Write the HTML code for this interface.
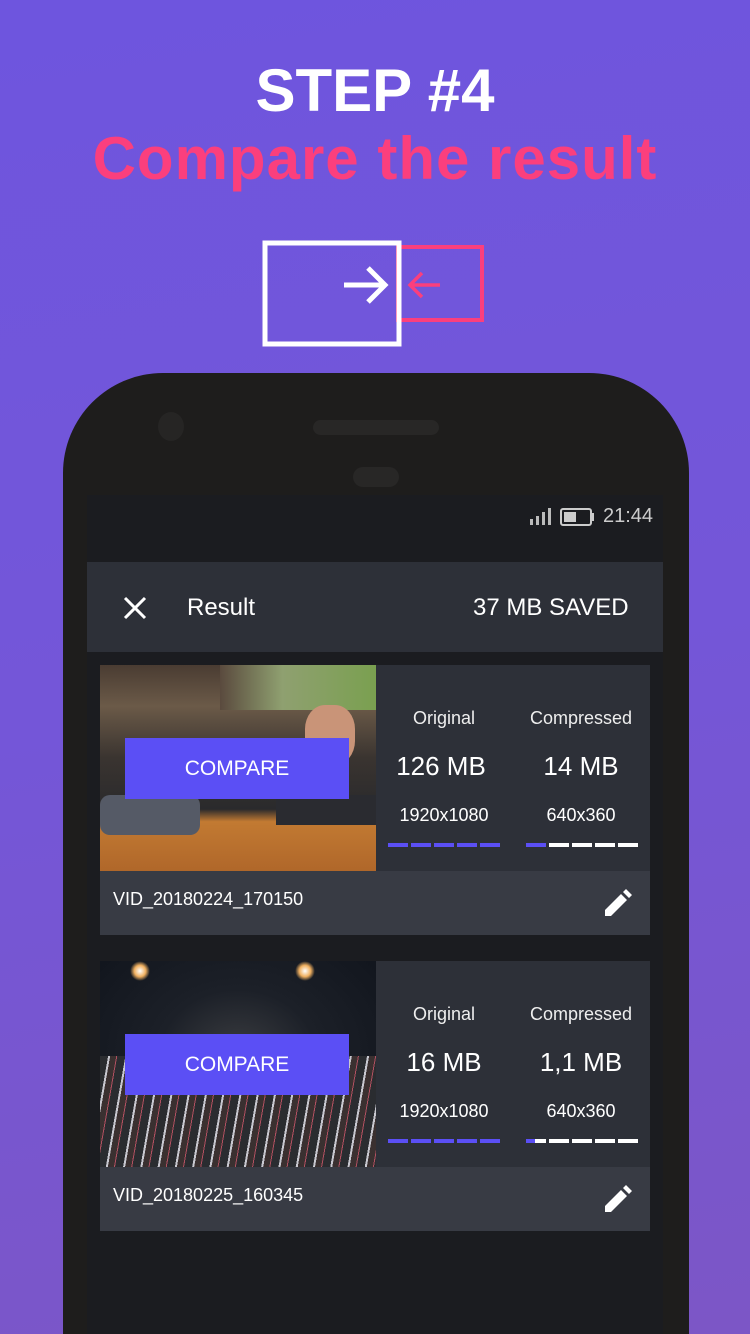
<!DOCTYPE html>
<html style="width:750px;height:1334px;overflow:hidden"><head><meta charset="utf-8"><style>
*{margin:0;padding:0;box-sizing:border-box}
body{width:750px;height:1334px;overflow:hidden;position:relative;font-family:"Liberation Sans",sans-serif;background:linear-gradient(170deg,#6e55de 0%,#7456d8 50%,#7c56c6 100%)}
.abs{position:absolute}
h1{position:absolute;left:0;width:750px;text-align:center;color:#fff;font-size:60px;font-weight:bold;top:56px}
h2{position:absolute;left:0;width:750px;text-align:center;color:#fb3f7d;font-size:60px;font-weight:bold;top:124px;letter-spacing:1px}
.phone{left:63px;top:373px;width:626px;height:961px;background:#1e1d1c;border-radius:100px 100px 0 0}
.screen{left:87px;top:495px;width:576px;height:839px;background:#1b1c20}
.t{color:#fff;position:absolute;white-space:nowrap}
.card{position:absolute;left:100px;width:550px;height:270px;background:#2d3038}
.strip{position:absolute;left:0;top:206px;width:550px;height:64px;background:#383b44}
.img{position:absolute;left:0;top:0;width:276px;height:206px;overflow:hidden}
.btn{position:absolute;left:25px;top:73px;width:224px;height:61px;background:#5b4ff5;color:#fff;font-size:21px;text-align:center;line-height:61px}
.lbl{font-size:18px;color:#eee;text-align:center;width:130px}
.big{font-size:26px;text-align:center;width:130px}
.res{font-size:18px;text-align:center;width:130px}
.bar{position:absolute;height:4px;width:20px}
</style></head><body>
<h1>STEP #4</h1>
<h2>Compare the result</h2>
<svg class="abs" style="left:260px;top:238px" width="230" height="110">
<rect x="138" y="9" width="84" height="73" fill="none" stroke="#fb3f7d" stroke-width="4"/>
<rect x="5" y="5" width="134" height="101" fill="none" stroke="#fff" stroke-width="5"/>
<path d="M84 47H124M108 30L125 47L108 64" fill="none" stroke="#fff" stroke-width="5"/>
<path d="M150 47H180M162 35L150 47L162 59" fill="none" stroke="#fb3f7d" stroke-width="3.5"/>
</svg>
<div class="abs phone"></div>
<div class="abs" style="left:158px;top:412px;width:26px;height:29px;border-radius:50%;background:#262524"></div>
<div class="abs" style="left:313px;top:420px;width:126px;height:15px;border-radius:8px;background:#282726"></div>
<div class="abs" style="left:353px;top:467px;width:46px;height:20px;border-radius:10px;background:#282726"></div>
<div class="abs screen"></div>
<svg class="abs" style="left:529px;top:505px" width="70" height="22">
<rect x="1" y="14" width="3" height="6" fill="#bbb"/><rect x="7" y="11" width="3" height="9" fill="#bbb"/><rect x="13" y="7" width="3" height="13" fill="#bbb"/><rect x="19" y="3" width="3" height="17" fill="#bbb"/>
<rect x="32" y="4" width="30" height="16" rx="2" fill="none" stroke="#ccc" stroke-width="2"/><rect x="35" y="7" width="12" height="10" fill="#ccc"/><rect x="63" y="8" width="2" height="8" fill="#ccc"/>
</svg>
<div class="t" style="left:603px;top:505px;font-size:20px;color:#ccc">21:44</div>
<div class="abs" style="left:87px;top:562px;width:576px;height:90px;background:#2d3038"></div>
<svg class="abs" style="left:123px;top:596px" width="24" height="24"><path d="M2 2L22 22M22 2L2 22" stroke="#fff" stroke-width="3"/></svg>
<div class="t" style="left:187px;top:594px;font-size:24px">Result</div>
<div class="t" style="left:473px;top:594px;font-size:24px">37 MB SAVED</div>

<div class="card" style="top:665px">
<div class="img" style="background:linear-gradient(180deg,#4a3c32 0%,#6b5a48 20%,#3a3430 45%,#2a2a2c 70%,#c27a32 76%,#b0672a 100%)">
<div class="abs" style="left:120px;top:0;width:156px;height:45px;background:linear-gradient(90deg,#5a4a3e,#8fa070 40%,#7aa050)"></div>
<div class="abs" style="left:205px;top:40px;width:50px;height:60px;border-radius:40%;background:#c99478"></div>
<div class="abs" style="left:176px;top:130px;width:100px;height:30px;background:#2a2b30"></div>
<div class="abs" style="left:0;top:130px;width:100px;height:40px;background:#555a66;border-radius:10px"></div>
</div>
<div class="btn">COMPARE</div>
<div class="strip"><div class="t" style="left:13px;top:18px;font-size:18px">VID_20180224_170150</div>
<svg class="abs" style="left:502px;top:18px" width="30" height="30"><path d="M3 27V21L19 5L25 11L9 27Z M21 3L24 0L30 6L27 9Z" fill="#fff"/></svg></div>
<div class="t lbl" style="left:279px;top:43px">Original</div>
<div class="t lbl" style="left:416px;top:43px">Compressed</div>
<div class="t big" style="left:276px;top:86px">126 MB</div>
<div class="t big" style="left:416px;top:86px">14 MB</div>
<div class="t res" style="left:279px;top:140px">1920x1080</div>
<div class="t res" style="left:416px;top:140px">640x360</div>
<div class="bar" style="left:288px;top:178px;width:112px;background:repeating-linear-gradient(90deg,#5b4ff5 0 20px,transparent 20px 23px)"></div>
<div class="bar" style="left:426px;top:178px;width:112px;background:linear-gradient(90deg,#5b4ff5 0 20px,transparent 20px 23px,#fff 23px),#fff;-webkit-mask:repeating-linear-gradient(90deg,#000 0 20px,transparent 20px 23px)"></div>
</div>

<div class="card" style="top:961px">
<div class="img" style="background:radial-gradient(ellipse at 50% 45%,#3a3c40 0%,#1c2028 40%,#10141c 100%)">
<div class="abs" style="left:0;top:95px;width:276px;height:111px;background:repeating-linear-gradient(100deg,#2a2c30 0 8px,#c8c8d0 8px 10px,#3a3030 10px 16px,#b05060 16px 17px)"></div>
<div class="abs" style="left:30px;top:0px;width:20px;height:20px;border-radius:50%;background:radial-gradient(#fff,#f0b060 40%,transparent 70%)"></div>
<div class="abs" style="left:195px;top:0px;width:20px;height:20px;border-radius:50%;background:radial-gradient(#fff,#f0b060 40%,transparent 70%)"></div>
</div>
<div class="btn">COMPARE</div>
<div class="strip"><div class="t" style="left:13px;top:18px;font-size:18px">VID_20180225_160345</div>
<svg class="abs" style="left:502px;top:18px" width="30" height="30"><path d="M3 27V21L19 5L25 11L9 27Z M21 3L24 0L30 6L27 9Z" fill="#fff"/></svg></div>
<div class="t lbl" style="left:279px;top:43px">Original</div>
<div class="t lbl" style="left:416px;top:43px">Compressed</div>
<div class="t big" style="left:279px;top:86px">16 MB</div>
<div class="t big" style="left:416px;top:86px">1,1 MB</div>
<div class="t res" style="left:279px;top:140px">1920x1080</div>
<div class="t res" style="left:416px;top:140px">640x360</div>
<div class="bar" style="left:288px;top:178px;width:112px;background:repeating-linear-gradient(90deg,#5b4ff5 0 20px,transparent 20px 23px)"></div>
<div class="bar" style="left:426px;top:178px;width:112px;background:linear-gradient(90deg,#5b4ff5 0 9px,#fff 9px);-webkit-mask:repeating-linear-gradient(90deg,#000 0 20px,transparent 20px 23px)"></div>
</div>
</body></html>
